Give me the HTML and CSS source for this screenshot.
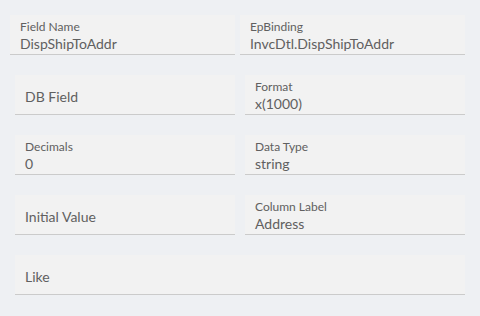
FILE: index.html
```html
<!DOCTYPE html>
<html lang="en">
<head>
    <meta charset="UTF-8">
    <title>Field Properties</title>
    <link rel="stylesheet" href="styles.css">
</head>
<body>
    <div class="props-form">
        <div class="row row-top">
            <div class="field">
                <span class="field-label">Field Name</span>
                <span class="field-value">DispShipToAddr</span>
            </div>
            <div class="field">
                <span class="field-label">EpBinding</span>
                <span class="field-value">InvcDtl.DispShipToAddr</span>
            </div>
        </div>
        <div class="row">
            <div class="field empty">
                <span class="field-placeholder">DB Field</span>
            </div>
            <div class="field">
                <span class="field-label">Format</span>
                <span class="field-value">x(1000)</span>
            </div>
        </div>
        <div class="row">
            <div class="field">
                <span class="field-label">Decimals</span>
                <span class="field-value">0</span>
            </div>
            <div class="field">
                <span class="field-label">Data Type</span>
                <span class="field-value">string</span>
            </div>
        </div>
        <div class="row">
            <div class="field empty">
                <span class="field-placeholder">Initial Value</span>
            </div>
            <div class="field">
                <span class="field-label">Column Label</span>
                <span class="field-value">Address</span>
            </div>
        </div>
        <div class="row row-full">
            <div class="field empty">
                <span class="field-placeholder">Like</span>
            </div>
        </div>
    </div>
</body>
</html>
```

FILE: styles.css
```css
body {
    margin: 0;
    background-color: #eef0f3;
    font-family: Lato, "Noto Sans", sans-serif;
    color: #606060;
}
.props-form {
    display: flex;
    flex-direction: column;
    gap: 20px;
    padding-top: 15px;
}
.row {
    display: grid;
    grid-template-columns: 220px 220px;
    gap: 10px;
    margin-left: 15px;
}
.row-top {
    grid-template-columns: 225px 225px;
    gap: 5px;
    margin-left: 10px;
}
.row-full {
    grid-template-columns: 450px;
}
.field {
    background-color: #f2f2f2;
    border-bottom: 1px solid #cbcbcb;
    padding: 4px 10px 0;
    height: 35px;
    display: flex;
    flex-direction: column;
}
.field.empty {
    padding-top: 0;
    height: 39px;
    justify-content: center;
}
.field-label {
    font-size: 12px;
    line-height: 16px;
}
.field-value {
    font-size: 14px;
    line-height: 17px;
}
.field-placeholder {
    font-size: 14px;
    padding-top: 4px;
}
```
